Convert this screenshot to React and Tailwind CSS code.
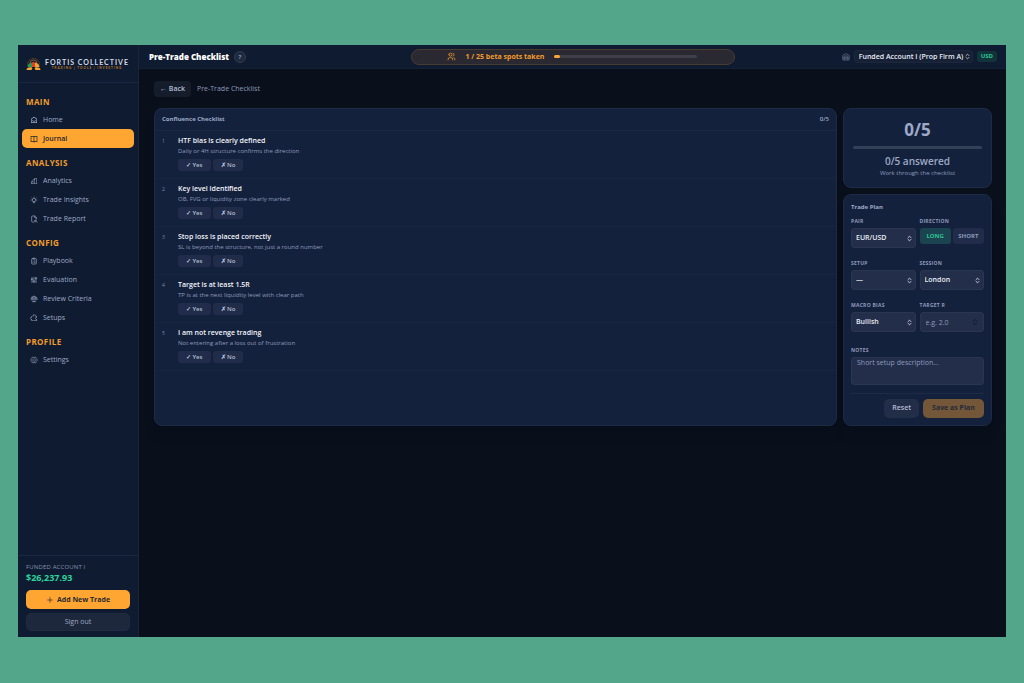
import { useState } from 'react';
import { ChevronsUpDown, Plus, Warehouse } from 'lucide-react';
import { PiChartBar, PiGearSix, PiPuzzlePiece } from 'react-icons/pi';
import { RiBookOpenLine, RiHomeSmile2Line } from 'react-icons/ri';
import { TbAdjustments, TbBulb, TbClipboardList, TbFileSearch, TbScale, TbUsers } from 'react-icons/tb';

const NAV_GROUPS = [
  {
    title: 'Main',
    items: [
      { label: 'Home', icon: RiHomeSmile2Line },
      { label: 'Journal', icon: RiBookOpenLine, active: true },
    ],
  },
  {
    title: 'Analysis',
    items: [
      { label: 'Analytics', icon: PiChartBar },
      { label: 'Trade Insights', icon: TbBulb },
      { label: 'Trade Report', icon: TbFileSearch },
    ],
  },
  {
    title: 'Config',
    items: [
      { label: 'Playbook', icon: TbClipboardList },
      { label: 'Evaluation', icon: TbAdjustments },
      { label: 'Review Criteria', icon: TbScale },
      { label: 'Setups', icon: PiPuzzlePiece },
    ],
  },
  {
    title: 'Profile',
    items: [{ label: 'Settings', icon: PiGearSix }],
  },
];

const CHECKLIST = [
  { title: 'HTF bias is clearly defined', hint: 'Daily or 4H structure confirms the direction' },
  { title: 'Key level identified', hint: 'OB, FVG or liquidity zone clearly marked' },
  { title: 'Stop loss is placed correctly', hint: 'SL is beyond the structure, not just a round number' },
  { title: 'Target is at least 1.5R', hint: 'TP is at the next liquidity level with clear path' },
  { title: 'I am not revenge trading', hint: 'Not entering after a loss out of frustration' },
];

function Logo() {
  return (
    <div className="flex h-[38px] shrink-0 items-center gap-1 border-b border-[#1a2740] pl-2">
      <svg viewBox="0 0 30 28" className="h-[14px] w-[15px] shrink-0">
        <path d="M3 15a12 12 0 0 1 24 0" fill="none" stroke="#77521f" strokeWidth="2" strokeDasharray="2 1" />
        <path d="M8 13a7 7 0 0 1 14 0" fill="none" stroke="#8a5a26" strokeWidth="2" />
        <path d="M3 20c0-5 3-8 8-9l3 9z" fill="#1f9a55" />
        <path d="M11 12l4-3 3 3v8h-6z" fill="#d8432b" />
        <path d="M18 11c5 1 9 4 9 9h-9z" fill="#f5a030" />
        <path d="M1 26c0-4 4-6 11-5l2 5zM29 26c0-4-4-6-11-5l-2 5z" fill="#f7a531" />
        <path d="M11 26l4-6 4 6z" fill="#0f1b30" />
      </svg>
      <div className="flex flex-col items-center whitespace-nowrap font-['Lato',sans-serif]">
        <span className="text-[7px] leading-[8px] font-bold tracking-[1px] text-[#d3d8e2]">FORTIS COLLECTIVE</span>
        <span className="text-[3px] leading-[4px] font-bold tracking-[1px] text-[#c07f29]">
          TRADING | TOOLS | INVESTING
        </span>
      </div>
    </div>
  );
}

function Sidebar() {
  return (
    <aside className="flex w-[121px] shrink-0 flex-col border-r border-[#1a2636] bg-[#0f1b30]">
      <Logo />
      <nav className="flex flex-1 flex-col gap-[6px] px-1 pt-[10px]">
        {NAV_GROUPS.map((group) => (
          <div key={group.title}>
            <h2 className="px-1 text-[8px] leading-[17px] font-bold tracking-wider text-[#f29c2c] uppercase">
              {group.title}
            </h2>
            {group.items.map(({ label, icon: Icon, active }) => (
              <a
                key={label}
                href="#"
                className={`flex h-[19px] items-center gap-[5px] rounded-[5px] px-2 text-[7px] ${
                  active ? 'bg-[#ffa531] font-semibold text-[#1f2430]' : 'font-medium text-[#9da9c6]'
                }`}
              >
                <Icon className="size-2" />
                <span className="pt-px">{label}</span>
              </a>
            ))}
          </div>
        ))}
      </nav>
      <div className="flex flex-col border-t border-[#1a2740] px-2 py-[6px]">
        <span className="text-[6px] leading-[10px] font-medium tracking-wide text-[#8592ae]">FUNDED ACCOUNT I</span>
        <span className="mb-1 text-[9px] leading-3 font-bold text-[#2ed29c]">$26,237.93</span>
        <button className="mt-[2px] mb-1 flex h-[19px] items-center justify-center gap-[3px] rounded-[5px] bg-[#ffa531] text-[7px] font-bold text-[#2a2a30]">
          <Plus className="size-2" />
          <span className="pt-px">Add New Trade</span>
        </button>
        <button className="h-[18px] rounded-[5px] border border-[#202b40] bg-[#1d283c] text-[7px] font-medium text-[#9da9c6]">
          Sign out
        </button>
      </div>
    </aside>
  );
}

function TopBar() {
  return (
    <header className="relative flex h-6 items-center border-b border-[#142036] bg-[#0f1b30] pr-[9px] pl-[10px]">
      <h1 className="text-[8px] font-extrabold text-white">Pre-Trade Checklist</h1>
      <button
        aria-label="Help"
        className="ml-[5px] size-3 rounded-full border border-[#303b50] bg-[#1f2a3e] text-[6px] leading-none font-bold text-[#8592ae]"
      >
        ?
      </button>
      <div className="absolute left-1/2 flex h-4 w-[324px] -translate-x-1/2 items-center rounded-full border border-[#4a3a30] bg-[#2a2932] pl-[35px] text-[#f29c2c]">
        <TbUsers className="size-[9px]" />
        <span className="ml-[10px] pt-px text-[7px] font-bold">1 / 25 beta spots taken</span>
        <div className="ml-[10px] h-[3px] w-[143px] rounded-full bg-[#3f3f4a]">
          <div className="h-full rounded-full bg-[#ffa531]" style={{ width: `${(1 / 25) * 100}%` }} />
        </div>
      </div>
      <div className="ml-auto flex items-center gap-1">
        <Warehouse className="size-2 text-[#68758f]" />
        <div className="relative">
          <select
            aria-label="Account"
            className="block h-[13px] w-[119px] appearance-none rounded-[3px] border border-[#1c273c] bg-[#162136] px-1 text-[7px] leading-none font-semibold text-[#e8ecf4]"
          >
            <option>Funded Account I (Prop Firm A)</option>
          </select>
          <ChevronsUpDown
            strokeWidth={3}
            className="pointer-events-none absolute top-[3px] right-[2px] size-[7px] text-[#bac2d2]"
          />
        </div>
        <span className="rounded-[3px] bg-[#11343a] px-1 text-[6px] leading-[11px] font-bold text-[#2bc493]">USD</span>
      </div>
    </header>
  );
}

function ChecklistItem({ number, title, hint, answer, onAnswer }) {
  const options = [
    { value: 'yes', label: '✓ Yes' },
    { value: 'no', label: '✗ No' },
  ];
  return (
    <li className="flex h-12 border-b border-[#172541] px-[7px] pt-[5px]">
      <span className="w-4 shrink-0 text-[5px] leading-[11px] text-[#7f8ba8]">{number}</span>
      <div>
        <h3 className="text-[7px] leading-[10px] font-semibold text-[#f3f5fa]">{title}</h3>
        <p className="text-[6px] leading-[11px] text-[#8e9aba]">{hint}</p>
        <div className="mt-[2px] flex gap-[2px]">
          {options.map((option) => (
            <button
              key={option.value}
              onClick={() => onAnswer(option.value)}
              className={`h-3 rounded-[3px] px-2 text-[6px] leading-none font-semibold text-[#b3bdd3] ${
                answer === option.value ? 'bg-[#34425f]' : 'bg-[#202c49]'
              }`}
            >
              {option.label}
            </button>
          ))}
        </div>
      </div>
    </li>
  );
}

function Field({ id, label, children }) {
  return (
    <div className="flex h-[42px] flex-col">
      <label htmlFor={id} className="mb-[2px] text-[5px] leading-[9px] font-bold tracking-wider text-[#8e9aba] uppercase">
        {label}
      </label>
      {children}
    </div>
  );
}

function SelectField({ id, label, options }) {
  return (
    <Field id={id} label={label}>
      <div className="relative">
        <select
          id={id}
          className="block h-5 w-full appearance-none rounded-[3px] border border-[#2a3550] bg-[#232e4a] px-1 text-[7px] font-semibold text-[#e8ecf4]"
        >
          {options.map((option) => (
            <option key={option}>{option}</option>
          ))}
        </select>
        <ChevronsUpDown
          strokeWidth={3}
          className="pointer-events-none absolute top-[7px] right-[3px] size-[7px] text-[#d5dae6]"
        />
      </div>
    </Field>
  );
}

function TradePlan({ onReset }) {
  const [direction, setDirection] = useState('LONG');
  return (
    <form className="rounded-lg border border-[#1d2b46] bg-[#14213d] px-[7px] py-[7px] shadow-lg">
      <h2 className="mb-[5px] text-[6px] leading-[10px] font-bold text-[#9da9c6]">Trade Plan</h2>
      <div className="grid grid-cols-2 gap-x-1">
        <SelectField id="pair" label="Pair" options={['EUR/USD', 'GBP/USD', 'USD/JPY']} />
        <Field label="Direction">
          <div className="grid grid-cols-2 gap-[2px]">
            {['LONG', 'SHORT'].map((side) => (
              <button
                key={side}
                type="button"
                onClick={() => setDirection(side)}
                className={`h-4 rounded-[3px] text-[6px] font-bold ${
                  direction === side ? 'bg-[#1b4450] text-[#2bc493]' : 'bg-[#202c49] text-[#8e9aba]'
                }`}
              >
                {side}
              </button>
            ))}
          </div>
        </Field>
        <SelectField id="setup" label="Setup" options={['—']} />
        <SelectField id="session" label="Session" options={['London', 'New York', 'Asia']} />
        <SelectField id="bias" label="Macro Bias" options={['Bullish', 'Bearish', 'Neutral']} />
        <Field id="target" label="Target R">
          <div className="relative">
            <input
              id="target"
              inputMode="decimal"
              placeholder="e.g. 2.0"
              className="block h-5 w-full rounded-[3px] border border-[#2a3550] bg-[#232e4a] px-[5px] text-[7px] text-white placeholder:text-[#8e9aba]"
            />
            <ChevronsUpDown
              strokeWidth={3}
              className="pointer-events-none absolute top-[6px] right-[5px] size-2 text-[#10182a]"
            />
          </div>
        </Field>
      </div>
      <label
        htmlFor="notes"
        className="mt-[3px] mb-[2px] block text-[5px] leading-[9px] font-bold tracking-wider text-[#8e9aba] uppercase"
      >
        Notes
      </label>
      <textarea
        id="notes"
        placeholder="Short setup description..."
        className="block h-7 w-full resize-none rounded-[3px] border border-[#2a3550] bg-[#232e4a] px-[5px] text-[7px] leading-[10px] text-white placeholder:text-[#8e9aba]"
      />
      <div className="mt-2 flex justify-end gap-1 border-t border-[#1d2b46] pt-[5px]">
        <button
          type="button"
          onClick={onReset}
          className="h-[19px] rounded-[5px] bg-[#222d48] px-2 text-[7px] font-semibold text-[#b3bdd3]"
        >
          Reset
        </button>
        <button type="button" disabled className="h-[19px] w-[61px] rounded-[5px] bg-[#745638] text-[7px] font-bold text-[#252a38]">
          Save as Plan
        </button>
      </div>
    </form>
  );
}

export default function App() {
  const [answers, setAnswers] = useState({});
  const answered = Object.keys(answers).length;
  const total = CHECKLIST.length;

  return (
    <div className="flex min-h-screen bg-[#53a68a] px-[18px] pt-[45px] pb-[46px] font-['Open_Sans',sans-serif]">
      <div className="flex flex-1 bg-[#09101c]">
        <Sidebar />
        <div className="flex min-w-0 flex-1 flex-col">
          <TopBar />
          <main className="pt-3 pr-[14px] pl-[15px]">
            <div className="mb-[11px] flex items-center gap-[6px]">
              <button className="h-4 rounded-[4px] bg-[#151d2b] px-[6px] text-[7px] font-semibold text-[#b3bdd3]">← Back</button>
              <span className="text-[7px] font-medium text-[#8e9aba]">Pre-Trade Checklist</span>
            </div>
            <div className="flex gap-[6px]">
              <section className="flex-1 rounded-lg border border-[#1d2b46] bg-[#14213d] shadow-lg">
                <div className="flex h-[22px] items-center justify-between border-b border-[#1a2945] px-[7px]">
                  <h2 className="text-[6px] font-bold text-[#9da9c6]">Confluence Checklist</h2>
                  <span className="text-[6px] font-semibold text-[#9da9c6]">
                    {answered}/{total}
                  </span>
                </div>
                <ol>
                  {CHECKLIST.map((item, idx) => (
                    <ChecklistItem
                      key={item.title}
                      number={idx + 1}
                      title={item.title}
                      hint={item.hint}
                      answer={answers[idx]}
                      onAnswer={(value) => setAnswers({ ...answers, [idx]: value })}
                    />
                  ))}
                </ol>
              </section>
              <div className="flex w-[149px] shrink-0 flex-col gap-[6px]">
                <section className="flex h-20 flex-col items-center rounded-lg border border-[#1d2b46] bg-[#14213d] px-[9px] pt-[11px]">
                  <span className="text-[17px] leading-5 font-bold text-[#9da9c6]">
                    {answered}/{total}
                  </span>
                  <div className="my-[6px] h-[3px] w-full rounded-full bg-[#344058]">
                    <div className="h-full rounded-full bg-[#ffa531]" style={{ width: `${(answered / total) * 100}%` }} />
                  </div>
                  <span className="text-[10px] leading-3 font-semibold text-[#9da9c6]">
                    {answered}/{total} answered
                  </span>
                  <span className="mt-px text-[6px] leading-[10px] text-[#8e9aba]">Work through the checklist</span>
                </section>
                <TradePlan onReset={() => setAnswers({})} />
              </div>
            </div>
          </main>
        </div>
      </div>
    </div>
  );
}
